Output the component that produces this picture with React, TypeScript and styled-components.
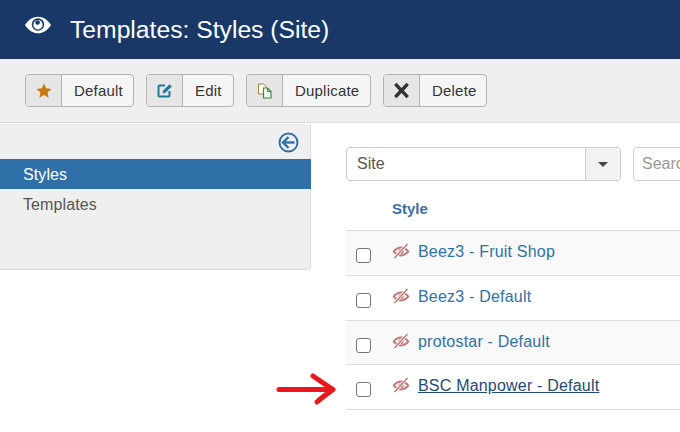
import styled, { createGlobalStyle } from "styled-components";
import { ReactNode } from "react";

const GlobalStyle = createGlobalStyle`
  html, body {
    margin: 0;
    padding: 0;
    background: #fff;
    overflow: hidden;
  }
  body {
    font-family: "Liberation Sans", Arial, sans-serif;
    font-size: 15px;
    color: #333;
  }
`;

const Page = styled.div`
  position: relative;
  width: 680px;
  height: 432px;
  overflow: hidden;
`;

const Header = styled.header`
  display: flex;
  align-items: center;
  gap: 18px;
  height: 59px;
  padding-left: 24px;
  box-sizing: border-box;
  background: #1a3867;
  color: #fff;
`;

const HeaderEye = styled.svg`
  margin-bottom: 9px;
`;

const Title = styled.h1`
  margin: 0;
  font-size: 24.7px;
  font-weight: 400;
  line-height: 59px;
`;

const Toolbar = styled.div`
  display: flex;
  gap: 12px;
  height: 64px;
  padding: 15px 0 0 25px;
  box-sizing: border-box;
  background: #efefef;
  border-bottom: 1px solid #dcdcdc;
`;

const ToolButton = styled.div`
  display: flex;
  height: 33px;
  box-sizing: border-box;
  border: 1px solid #b3b3b3;
  border-radius: 4px;
  background: #f5f5f5;
  overflow: hidden;
`;

const ToolIcon = styled.span`
  display: flex;
  align-items: center;
  justify-content: center;
  width: 35px;
  background: #e6e6e6;
  border-right: 1px solid #b3b3b3;
`;

const ToolLabel = styled.span<{ $width: number }>`
  width: ${(p) => p.$width}px;
  padding-left: 12px;
  box-sizing: border-box;
  font-size: 15px;
  letter-spacing: 0.2px;
  line-height: 31px;
  color: #333;
`;

const Body = styled.div`
  display: flex;
  align-items: flex-start;
`;

const Sidebar = styled.nav`
  width: 311px;
  height: 146px;
  margin-top: 1px;
  box-sizing: border-box;
  background: #efefef;
  border-right: 1px solid #dcdcdc;
  border-bottom: 1px solid #dcdcdc;
  border-bottom-right-radius: 3px;
`;

const ToggleRow = styled.div`
  display: flex;
  justify-content: flex-end;
  height: 35px;
  padding: 8px 11px 0 0;
  box-sizing: border-box;
`;

const NavItem = styled.div<{ $active?: boolean }>`
  height: 30px;
  width: 311px;
  padding-left: 23px;
  box-sizing: border-box;
  font-size: 16px;
  letter-spacing: 0.1px;
  line-height: 31px;
  color: ${(p) => (p.$active ? "#fff" : "#555")};
  background: ${(p) => (p.$active ? "#2f70a9" : "transparent")};
`;

const Content = styled.main`
  flex: 1;
  min-width: 0;
  padding: 24px 0 0 35px;
`;

const Filters = styled.div`
  display: flex;
  gap: 12px;
  width: 334px;
  overflow: hidden;
`;

const SelectBox = styled.div`
  display: flex;
  flex: none;
  width: 275px;
  height: 34px;
  box-sizing: border-box;
  border: 1px solid #cccccc;
  border-radius: 4px;
  overflow: hidden;
`;

const SelectValue = styled.span`
  flex: 1;
  padding-left: 10px;
  font-size: 16px;
  line-height: 32px;
  color: #555;
`;

const SelectCaret = styled.span`
  display: flex;
  align-items: center;
  justify-content: center;
  width: 34px;
  background: #f2f2f2;
  border-left: 1px solid #cccccc;
`;

const Caret = styled.span`
  width: 0;
  height: 0;
  border-left: 5px solid transparent;
  border-right: 5px solid transparent;
  border-top: 5px solid #444;
`;

const SearchBox = styled.div`
  flex: none;
  width: 200px;
  height: 34px;
  box-sizing: border-box;
  padding-left: 8px;
  border: 1px solid #cccccc;
  border-radius: 4px;
  font-size: 16px;
  line-height: 32px;
  color: #999;
`;

const TableHead = styled.div`
  height: 49px;
  padding-left: 46px;
  font-size: 15px;
  font-weight: 700;
  line-height: 56px;
  color: #3d6f9f;
  border-bottom: 1px solid #dddddd;
`;

const Row = styled.div<{ $striped?: boolean }>`
  display: flex;
  align-items: flex-start;
  height: 44.75px;
  box-sizing: border-box;
  padding-left: 10px;
  background: ${(p) => (p.$striped ? "#f9f9f9" : "#fff")};
  border-bottom: 1px solid #dddddd;
`;

const Check = styled.span`
  flex: none;
  width: 15px;
  height: 15px;
  margin-top: 17px;
  box-sizing: border-box;
  border: 1px solid #767676;
  border-radius: 3px;
  background: #fff;
`;

const EyeSlot = styled.span`
  flex: none;
  display: flex;
  width: 26px;
  margin: 12px 0 0 21px;
`;

const StyleLink = styled.a<{ $current?: boolean }>`
  font-size: 16px;
  letter-spacing: 0.2px;
  line-height: 42.6px;
  color: ${(p) => (p.$current ? "#1f4a78" : "#3071a9")};
  text-decoration: ${(p) => (p.$current ? "underline" : "none")};
  white-space: nowrap;
`;

const ArrowMark = styled.svg`
  position: absolute;
  left: 275px;
  top: 370px;
`;

function HiddenEye() {
  return (
    <svg width="18" height="16" viewBox="0 0 18 16" fill="none">
      <path
        d="M0.5 8.500C3 5.200 6 3.600 9 3.600s6 1.600 8.500 4.900C15 11.800 12 13.400 9 13.400S3 11.800 0.500 8.500Z"
        fill="#bd7a78"
      />
      <path
        d="M3 8.500C4.600 6.700 6.600 5.600 9 5.600s4.400 1.100 6 2.900c-1.600 1.800-3.600 2.900-6 2.900S4.600 10.300 3 8.500Z"
        fill="#f6eeee"
      />
      <circle cx="9" cy="8.500" r="2.600" fill="#bd7a78" />
      <path d="M2.500 15L15.500 1" stroke="#fff" strokeWidth="3" />
      <path d="M2.500 15L15.500 1" stroke="#bd7a78" strokeWidth="1.500" />
    </svg>
  );
}

const styleRows = [
  { name: "Beez3 - Fruit Shop", striped: true },
  { name: "Beez3 - Default" },
  { name: "protostar - Default", striped: true },
  { name: "BSC Manpower - Default", current: true },
];

function Tool({ icon, label, width }: { icon: ReactNode; label: string; width: number }) {
  return (
    <ToolButton>
      <ToolIcon>{icon}</ToolIcon>
      <ToolLabel $width={width}>{label}</ToolLabel>
    </ToolButton>
  );
}

export default function App() {
  return (
    <Page>
      <GlobalStyle />
      <Header>
        <HeaderEye width="28" height="20" viewBox="0 0 28 20">
          <path
            d="M1 10C4.500 4.500 9 1.700 14 1.700S23.500 4.500 27 10c-3.500 5.500-8 8.300-13 8.300S4.500 15.500 1 10Z"
            fill="#fff"
          />
          <circle cx="14" cy="9.500" r="6.200" fill="#1a3867" />
          <circle cx="14" cy="9.800" r="4.700" fill="#fff" />
          <circle cx="13.600" cy="7.500" r="2.300" fill="#1a3867" />
        </HeaderEye>
        <Title>Templates: Styles (Site)</Title>
      </Header>
      <Toolbar>
        <Tool
          width={71}
          label="Default"
          icon={
            <svg width="16" height="15" viewBox="0 0 16 15">
              <path
                d="M8 .5l2.200 4.800 5.300.6-3.900 3.600 1 5.200L8 12.100l-4.600 2.600 1-5.200L.5 5.900l5.300-.6Z"
                fill="#c87a12"
              />
            </svg>
          }
        />
        <Tool
          width={50}
          label="Edit"
          icon={
            <svg width="16" height="15" viewBox="0 0 16 15" fill="none">
              <path
                d="M8 2.500H2.500a1 1 0 0 0-1 1v9a1 1 0 0 0 1 1h9a1 1 0 0 0 1-1V8"
                stroke="#23799b"
                strokeWidth="2"
              />
              <path d="M5.500 10.500l.7-3L12.500 1.200l2.300 2.300L8.500 9.800Z" fill="#23799b" />
            </svg>
          }
        />
        <Tool
          width={87}
          label="Duplicate"
          icon={
            <svg width="16" height="16" viewBox="0 0 16 16" fill="none">
              <path d="M1.500 1h5l2.500 2.500V11h-7.500Z" stroke="#9a8a3a" strokeWidth="1" fill="#fdfdf5" />
              <path d="M6.500 5h4l3.500 3.500V15H6.500Z" stroke="#378a3c" strokeWidth="1.200" fill="#f2f7f0" />
              <path d="M10.500 5v3.500H14" stroke="#378a3c" strokeWidth="1" />
            </svg>
          }
        />
        <Tool
          width={66}
          label="Delete"
          icon={
            <svg width="17" height="17" viewBox="0 0 16 16">
              <path
                d="M1 13.200 5.700 8 1 2.800 3.300.7 8 5.700 12.700.7 15 2.800 10.300 8 15 13.200l-2.300 2.100L8 10.300l-4.700 5Z"
                fill="#333"
              />
            </svg>
          }
        />
      </Toolbar>
      <Body>
        <Sidebar>
          <ToggleRow>
            <svg width="21" height="21" viewBox="0 0 21 21" fill="none">
              <circle cx="10.500" cy="10.500" r="9" stroke="#2f70a9" strokeWidth="2" />
              <path d="M5 10.500h11.500" stroke="#2f70a9" strokeWidth="2.400" />
              <path d="M10.500 5l-5.500 5.500 5.500 5.500" stroke="#2f70a9" strokeWidth="2.400" />
            </svg>
          </ToggleRow>
          <NavItem $active>Styles</NavItem>
          <NavItem>Templates</NavItem>
        </Sidebar>
        <Content>
          <Filters>
            <SelectBox>
              <SelectValue>Site</SelectValue>
              <SelectCaret>
                <Caret />
              </SelectCaret>
            </SelectBox>
            <SearchBox>Search</SearchBox>
          </Filters>
          <TableHead>Style</TableHead>
          {styleRows.map((row) => (
            <Row key={row.name} $striped={row.striped}>
              <Check />
              <EyeSlot>
                <HiddenEye />
              </EyeSlot>
              <StyleLink href="#" $current={row.current}>
                {row.name}
              </StyleLink>
            </Row>
          ))}
        </Content>
      </Body>
      <ArrowMark width="64" height="40" viewBox="0 0 64 40" fill="none">
        <path d="M4 19.500C20 19.500 40 19.500 57 19.500" stroke="#e8191c" strokeWidth="5" strokeLinecap="round" />
        <path
          d="M38 6C45 11 52 15.500 58 19.500C52 24 46 28 42 32"
          stroke="#e8191c"
          strokeWidth="5"
          strokeLinecap="round"
          strokeLinejoin="round"
        />
      </ArrowMark>
    </Page>
  );
}
